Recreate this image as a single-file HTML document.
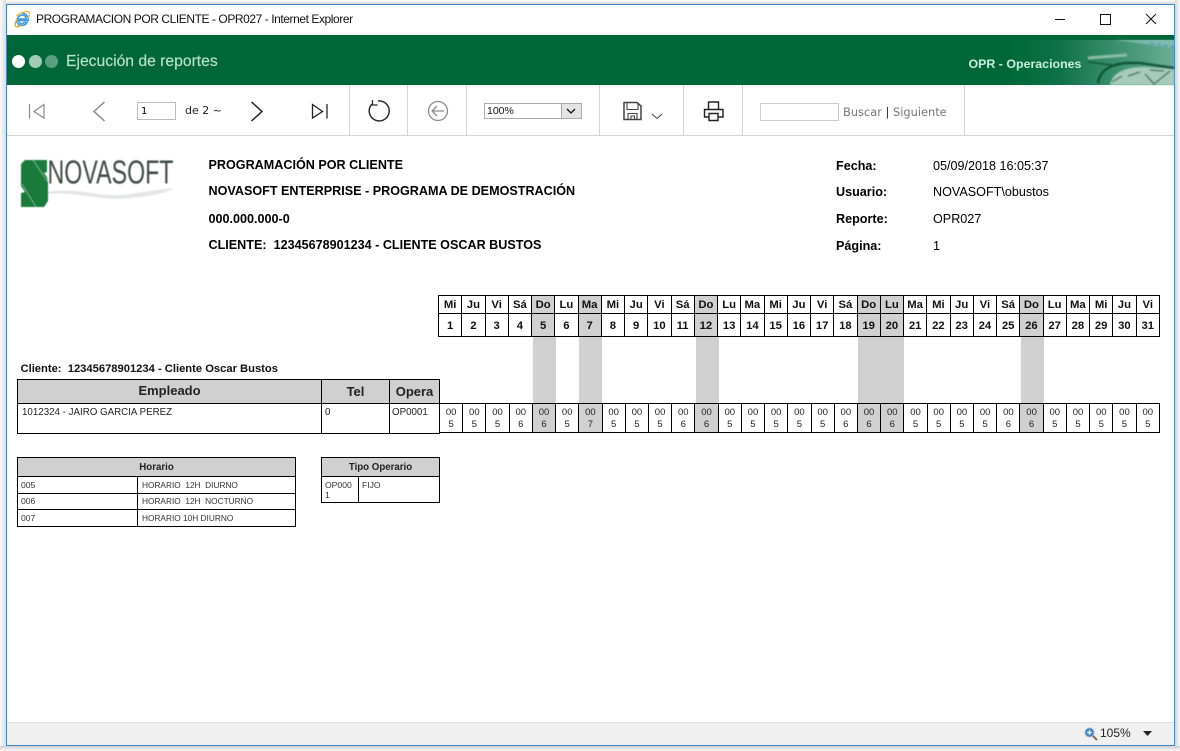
<!DOCTYPE html>
<html><head><meta charset="utf-8"><title>PROGRAMACION POR CLIENTE - OPR027 - Internet Explorer</title>
<style>
html,body{margin:0;padding:0;width:1180px;height:751px;overflow:hidden;background:#e9e9e9;font-family:"Liberation Sans",sans-serif;color:#000}
.a{position:absolute;white-space:nowrap}
#win{position:absolute;left:6px;top:4px;width:1169px;height:742px;background:#fff;border:1px solid #3f8ac9;box-sizing:border-box}
.sep{position:absolute;top:85px;width:1px;height:50px;background:#d4d4d4}
.h{font-size:12.6px;font-weight:bold;line-height:14px}
.r{font-size:12.6px;line-height:14px}
table{border-collapse:collapse;table-layout:fixed;position:absolute}
td{border:1px solid #000;padding:0;text-align:center;overflow:hidden}
.days td{font-size:11.3px;font-weight:bold;line-height:12px;color:#111;padding-top:1px}
.g{background:#d0d0d0}
.data td{font-size:9.5px;line-height:11.5px;color:#222;height:29px;vertical-align:top;padding-top:3px;box-sizing:border-box}
.s{font-size:8.6px;color:#333;line-height:10px}
.s2{font-size:8.3px}
svg{position:absolute;overflow:visible}
</style></head><body>
<div style="position:absolute;left:0;top:0;width:1180px;height:4px;background:linear-gradient(#fff,#d8d8d8)"></div>
<div style="position:absolute;left:0;top:0;width:6px;height:751px;background:linear-gradient(90deg,#fafafa,#dcdcdc)"></div>
<div style="position:absolute;left:1175px;top:0;width:5px;height:751px;background:linear-gradient(90deg,#d4d4d4,#fafafa)"></div>
<div style="position:absolute;left:0;top:746px;width:1180px;height:5px;background:linear-gradient(#cfcfcf,#f8f8f8)"></div>
<div id="win"></div>

<svg style="left:14px;top:11px" width="17" height="17" viewBox="0 0 18 18">
<path d="M4.5 8.5 H13 C12.8 5.5 10.5 4.3 8.7 4.3 C5.8 4.3 3.4 6.8 3.1 10 C2.9 13 5 15.3 8.5 15.3 C10.8 15.3 12.6 14.3 13.6 12.2 H10.6 C10 13 9.3 13.4 8.5 13.4 C6.8 13.4 5.2 12.2 5.1 10.2 H15.2 C15.6 6 12.8 2.4 8.7 2.4" fill="none" stroke="#3f9ce0" stroke-width="1.7"/>
<path d="M2.5 5.5 C5.5 2 13 -0.5 15.5 1.2 C17.3 2.6 16 5.5 14.8 7.5" fill="none" stroke="#f2b632" stroke-width="1.4"/>
<path d="M3 9 C1 12.5 0.3 16 2.3 16.6 C4 17 6 16 7.5 15" fill="none" stroke="#e8a628" stroke-width="1.4"/>
</svg>
<div class="a" style="left:36px;top:12px;font-size:12px;line-height:15px;color:#111;letter-spacing:-.43px">PROGRAMACION POR CLIENTE - OPR027 - Internet Explorer</div>
<svg style="left:1055px;top:12px" width="105" height="14" viewBox="0 0 105 14" fill="none" stroke="#111" stroke-width="1">
<path d="M0 7.5 H10"/><path d="M45.5 2.5 H55.5 V12.5 H45.5 Z"/><path d="M91 2 L101 12 M101 2 L91 12"/>
</svg>

<!-- green banner -->
<div style="position:absolute;left:7px;top:35px;width:1167px;height:50px;background:#006838"></div>
<div style="position:absolute;left:1010px;top:40px;width:164px;height:45px;background:linear-gradient(90deg,#006838 0%,#0e7148 30%,#2f8763 55%,#4f9c80 80%,#6cae96 100%)"></div>
<svg style="left:1000px;top:40px;filter:blur(.7px)" width="174" height="45" viewBox="0 0 174 45">
<path d="M115 0 L174 8 V0 Z" fill="#8cc4b8" opacity=".7"/>
<path d="M150 3 L174 7" stroke="#5a9cc0" stroke-width="2" stroke-dasharray="4 3"/>
<path d="M110 45 C112 33 124 27 145 27 L174 29 V45 Z" fill="#a6cbbb"/>
<path d="M88 18 L127 15" stroke="#8fbda8" stroke-width="3"/>
<path d="M98 43 C100 30 110 25 125 23 L140 23 L174 28" fill="none" stroke="#0c4f33" stroke-width="2.2"/>
<path d="M88 22 L112 25" stroke="#0c4f33" stroke-width="1.2"/>
<path d="M145 34 L154 44 L170 31 M128 36 L140 32 M112 42 L122 36 M150 30 L164 31" stroke="#2f5a48" stroke-width="1" fill="none"/>
</svg>
<div class="a" style="left:968.5px;top:57px;font-size:12.4px;font-weight:bold;line-height:14px;color:#c9eeda">OPR - Operaciones</div>
<div style="position:absolute;left:12px;top:55px;width:13px;height:13px;border-radius:50%;background:#fff"></div>
<div style="position:absolute;left:29px;top:55px;width:13px;height:13px;border-radius:50%;background:#a3ccb6"></div>
<div style="position:absolute;left:45px;top:55px;width:13px;height:13px;border-radius:50%;background:#5a9f7f"></div>
<div class="a" style="left:66px;top:53px;font-size:15.7px;line-height:18px;color:#b9e0cb;-webkit-text-stroke:.15px #b9e0cb">Ejecución de reportes</div>

<!-- toolbar -->
<div style="position:absolute;left:7px;top:135px;width:1167px;height:1px;background:#d4d4d4"></div>
<div class="sep" style="left:349px"></div><div class="sep" style="left:407px"></div><div class="sep" style="left:466px"></div><div class="sep" style="left:599px"></div><div class="sep" style="left:683px"></div><div class="sep" style="left:742px"></div><div class="sep" style="left:964px"></div>
<svg style="left:0;top:85px" width="1180" height="50" viewBox="0 85 1180 50" fill="none">
<g stroke="#8a8a8a" stroke-width="1.2"><path d="M29.5 104 V118.5"/><path d="M44 104.5 L34 111.5 L44 118 Z"/><path d="M104.5 102 L94 111.5 L104.5 121" stroke-width="1.5"/></g>
<g stroke="#222" stroke-width="1.3"><path d="M251.5 102 L262 111.5 L251.5 121" stroke-width="1.5"/><path d="M312.5 104.5 L322.5 111.5 L312.5 118 Z"/><path d="M327 104 V118.5"/>
<path d="M378 101 A10 10 0 1 1 372 104" stroke-width="1.4"/><path d="M372.5 100 V105 H377.5" stroke-width="1.2"/></g>
<g stroke="#8c8c8c" stroke-width="1.3"><circle cx="438" cy="111" r="9.5"/><path d="M444 111 H432 M437 106 L432 111 L437 116"/></g>
<g stroke="#444" stroke-width="1.5"><path d="M624 102.5 H637 L641 106 V119.5 H624 Z"/><path d="M627 102.5 V109.5 H638 V103.5" stroke-width="1.1"/><path d="M628 119.5 V113.5 H637 V119.5 M631 119 V116 H634.5 V119" stroke-width="1.1"/></g>
<path d="M652 114 L657 118.5 L662 114" stroke="#444" stroke-width="1"/>
<g stroke="#222" stroke-width="1.4"><path d="M708.5 109 V102 H718.5 V109"/><path d="M708.5 117 H704.5 V109.5 H723 V117 H718.5"/><path d="M709 113.5 H718 V120.5 H709 Z"/></g>
</svg>
<div class="a" style="left:137px;top:102px;width:39px;height:18px;border:1px solid #bbb;box-sizing:border-box;font-family:'DejaVu Sans',sans-serif;font-size:10px;line-height:17px;padding-left:3px">1</div>
<div class="a" style="left:185px;top:104px;font-family:'DejaVu Sans',sans-serif;font-size:11px;line-height:14px;color:#222">de 2 ~</div>
<div class="a" style="left:484px;top:103px;width:98px;height:16px;border:1px solid #aaa;box-sizing:border-box;font-size:10.5px;line-height:14px;padding-left:2px;color:#111">100%</div>
<div style="position:absolute;left:561px;top:104px;width:20px;height:14px;background:#e3e3e3;border-left:1px solid #aaa;box-sizing:border-box"></div>
<svg style="left:566px;top:108px" width="10" height="6" fill="none" stroke="#111" stroke-width="1.3"><path d="M1 1 L5 5 L9 1"/></svg>
<div class="a" style="left:760px;top:103px;width:79px;height:18px;border:1px solid #ccc;box-sizing:border-box"></div>
<div class="a" style="left:843px;top:105px;font-family:'DejaVu Sans',sans-serif;font-size:11.4px;line-height:14px;color:#777">Buscar <span style="color:#222">|</span> Siguiente</div>

<!-- logo -->
<svg style="left:19px;top:158px;filter:blur(.5px)" width="156" height="52" viewBox="19 158 156 52">
<path d="M21 164 L25 160 H47 V172 L44 173 L47 177 L48 182 V201 L44 207 H21 V193 L25 192 L21 186 Z" fill="#1a7a3c"/>
<path d="M33 160 L48 182 M22 184 L36 207" stroke="#8fc0a0" stroke-width=".8"/>
<text x="47.5" y="183.5" font-family="Liberation Sans" font-size="33" fill="#3d4a44" textLength="126" lengthAdjust="spacingAndGlyphs">NOVASOFT</text>
<path d="M48 192 C80 186 100 199 130 194 C150 191 165 189 174 188 C165 194 150 196 130 198 C100 202 80 191 48 194 Z" fill="#e2e6e4"/>
</svg>

<!-- heading -->
<div class="a h" style="left:208.5px;top:158px">PROGRAMACIÓN POR CLIENTE</div>
<div class="a h" style="left:208.5px;top:184px">NOVASOFT ENTERPRISE - PROGRAMA DE DEMOSTRACIÓN</div>
<div class="a h" style="left:208.5px;top:211.5px">000.000.000-0</div>
<div class="a h" style="left:208.5px;top:238px">CLIENTE:&nbsp; 12345678901234 - CLIENTE OSCAR BUSTOS</div>
<div class="a h" style="left:836px;top:158.5px">Fecha:</div><div class="a r" style="left:933px;top:158.5px">05/09/2018 16:05:37</div>
<div class="a h" style="left:836px;top:184.5px">Usuario:</div><div class="a r" style="left:933px;top:184.5px">NOVASOFT\obustos</div>
<div class="a h" style="left:836px;top:211.5px">Reporte:</div><div class="a r" style="left:933px;top:211.5px">OPR027</div>
<div class="a h" style="left:836px;top:238.5px">Página:</div><div class="a r" style="left:933px;top:238.5px">1</div>

<!-- grey columns -->
<div class="g" style="position:absolute;left:532.5px;top:336px;width:23px;height:68px"></div>
<div class="g" style="position:absolute;left:579px;top:336px;width:23px;height:68px"></div>
<div class="g" style="position:absolute;left:695.5px;top:336px;width:23px;height:68px"></div>
<div class="g" style="position:absolute;left:858px;top:336px;width:46px;height:68px"></div>
<div class="g" style="position:absolute;left:1020.5px;top:336px;width:23px;height:68px"></div>

<!-- days -->
<table class="days" style="left:438px;top:295px;width:722px">
<tr style="height:18px"><td>Mi</td><td>Ju</td><td>Vi</td><td>Sá</td><td class="g">Do</td><td>Lu</td><td class="g">Ma</td><td>Mi</td><td>Ju</td><td>Vi</td><td>Sá</td><td class="g">Do</td><td>Lu</td><td>Ma</td><td>Mi</td><td>Ju</td><td>Vi</td><td>Sá</td><td class="g">Do</td><td class="g">Lu</td><td>Ma</td><td>Mi</td><td>Ju</td><td>Vi</td><td>Sá</td><td class="g">Do</td><td>Lu</td><td>Ma</td><td>Mi</td><td>Ju</td><td>Vi</td></tr>
<tr style="height:23px"><td>1</td><td>2</td><td>3</td><td>4</td><td class="g">5</td><td>6</td><td class="g">7</td><td>8</td><td>9</td><td>10</td><td>11</td><td class="g">12</td><td>13</td><td>14</td><td>15</td><td>16</td><td>17</td><td>18</td><td class="g">19</td><td class="g">20</td><td>21</td><td>22</td><td>23</td><td>24</td><td>25</td><td class="g">26</td><td>27</td><td>28</td><td>29</td><td>30</td><td>31</td></tr>
</table>

<!-- client -->
<div class="a" style="left:20.5px;top:362px;font-size:11.2px;font-weight:bold;line-height:14px;color:#111">Cliente:&nbsp; 12345678901234 - Cliente Oscar Bustos</div>
<table style="left:17px;top:379px;width:422px">
<colgroup><col style="width:304px"><col style="width:68px"><col style="width:50px"></colgroup>
<tr style="height:24px;background:#d0d0d0;font-size:13px;font-weight:bold;color:#222"><td style="padding-bottom:2px">Empleado</td><td>Tel</td><td>Opera</td></tr>
<tr style="height:30px;font-size:9.75px;color:#222"><td style="text-align:left;vertical-align:top;padding:3px 0 0 4px;line-height:11px">1012324 - JAIRO GARCIA PEREZ</td><td style="text-align:left;vertical-align:top;padding:3px 0 0 3px;line-height:11px">0</td><td style="text-align:left;vertical-align:top;padding:3px 0 0 2px;line-height:11px">OP0001</td></tr>
</table>
<table class="data" style="left:439px;top:403px;width:721px">
<tr><td>00<br>5</td><td>00<br>5</td><td>00<br>5</td><td>00<br>6</td><td class="g">00<br>6</td><td>00<br>5</td><td class="g">00<br>7</td><td>00<br>5</td><td>00<br>5</td><td>00<br>5</td><td>00<br>6</td><td class="g">00<br>6</td><td>00<br>5</td><td>00<br>5</td><td>00<br>5</td><td>00<br>5</td><td>00<br>5</td><td>00<br>6</td><td class="g">00<br>6</td><td class="g">00<br>6</td><td>00<br>5</td><td>00<br>5</td><td>00<br>5</td><td>00<br>5</td><td>00<br>6</td><td class="g">00<br>6</td><td>00<br>5</td><td>00<br>5</td><td>00<br>5</td><td>00<br>5</td><td>00<br>5</td></tr>
</table>

<!-- horario -->
<table style="left:17px;top:457px;width:278px">
<colgroup><col style="width:120px"><col style="width:158px"></colgroup>
<tr style="height:19px;background:#d0d0d0;font-size:9.7px;font-weight:bold;color:#222"><td colspan="2">Horario</td></tr>
<tr class="s" style="height:16.5px"><td style="text-align:left;padding-left:3px">005</td><td class="s2" style="text-align:left;padding-left:4px">HORARIO&nbsp; 12H&nbsp; DIURNO</td></tr>
<tr class="s" style="height:16.5px"><td style="text-align:left;padding-left:3px">006</td><td class="s2" style="text-align:left;padding-left:4px">HORARIO&nbsp; 12H&nbsp; NOCTURNO</td></tr>
<tr class="s" style="height:16.5px"><td style="text-align:left;padding-left:3px">007</td><td class="s2" style="text-align:left;padding-left:4px">HORARIO 10H DIURNO</td></tr>
</table>
<table style="left:321px;top:457px;width:118px">
<colgroup><col style="width:37px"><col style="width:81px"></colgroup>
<tr style="height:19px;background:#d0d0d0;font-size:9.7px;font-weight:bold;color:#222"><td colspan="2">Tipo Operario</td></tr>
<tr class="s" style="height:26px"><td style="text-align:left;vertical-align:top;padding:3px 0 0 3px;white-space:normal">OP000<br>1</td><td style="text-align:left;vertical-align:top;padding:3px 0 0 3px">FIJO</td></tr>
</table>

<!-- status -->
<div style="position:absolute;left:7px;top:722px;width:1167px;height:23px;background:#f0f0f0;border-top:1px solid #dcdcdc;box-sizing:border-box"></div>
<svg style="left:1084px;top:727px" width="14" height="14" viewBox="0 0 14 14"><circle cx="5.5" cy="5.5" r="4.5" fill="#3f7fc0" stroke="#9cb8d4"/><path d="M3.2 5.5 H7.8 M5.5 3.2 V7.8" stroke="#fff" stroke-width="1.4"/><path d="M9 9 L13 13" stroke="#8a6a50" stroke-width="2"/></svg>
<div class="a" style="left:1100px;top:726px;font-size:12px;line-height:15px;color:#222">105%</div>
<svg style="left:1143px;top:731px" width="9" height="5"><path d="M0 0 H9 L4.5 5 Z" fill="#222"/></svg>
</body></html>
